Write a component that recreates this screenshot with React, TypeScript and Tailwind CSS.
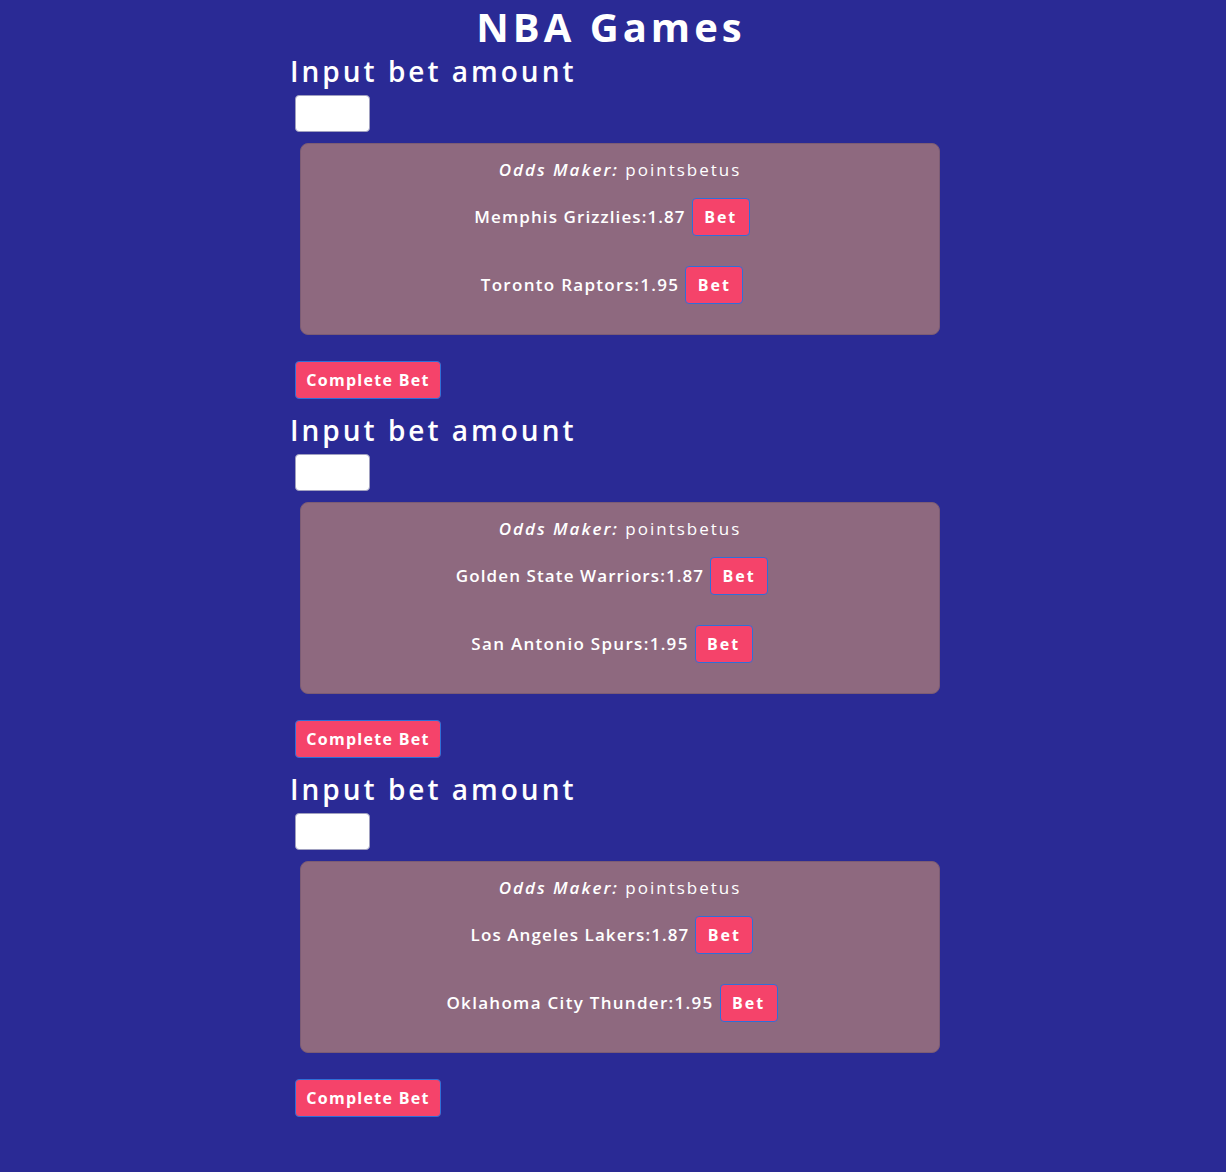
import React from "react";

const games = [
  ["Memphis Grizzlies", "Toronto Raptors"],
  ["Golden State Warriors", "San Antonio Spurs"],
  ["Los Angeles Lakers", "Oklahoma City Thunder"],
];

function BetButton({ label, className }: { label: string; className: string }) {
  return (
    <button
      className={
        "h-[38px] rounded-[4px] border border-[#2f6fd8] bg-[#f5436a] font-bold text-white " +
        className
      }
    >
      {label}
    </button>
  );
}

function Section({ teams, first }: { teams: string[]; first: boolean }) {
  return (
    <div className={first ? "pt-0" : "pt-[14px]"}>
      <h2 className="text-[28px] leading-[34px] font-semibold tracking-[3px]">Input bet amount</h2>
      <input className="ml-[5px] mt-[7px] block h-[37px] w-[75px] rounded-[4px] border border-[#a0a0c0] bg-white" />
      <div className="ml-[10px] mt-[11px] w-[640px] rounded-[8px] border border-[#7c5c74] bg-[#8e697f] pt-[14px] pb-[30px]">
        <div className="text-center text-[17px] leading-[24px] tracking-[2px] font-medium">
          <span className="italic font-semibold">Odds Maker:</span> pointsbetus
        </div>
        <div className="mt-[16px] flex flex-col gap-[30px]">
          <div className="flex items-center justify-center">
            <span className="text-[17px] font-semibold tracking-[1.1px]">{teams[0]}:1.87</span>
            <BetButton label="Bet" className="ml-[6px] mr-[16px] w-[58px] text-[16px] tracking-[2px]" />
          </div>
          <div className="flex items-center justify-center">
            <span className="text-[17px] font-semibold tracking-[1.3px]">{teams[1]}:1.95</span>
            <BetButton label="Bet" className="ml-[6px] mr-[16px] w-[58px] text-[16px] tracking-[2px]" />
          </div>
        </div>
      </div>
      <BetButton label="Complete Bet" className="ml-[5px] mt-[26px] w-[146px] text-[16px] tracking-[1.3px]" />
    </div>
  );
}

export default function App() {
  return (
    <div
      className="min-h-screen bg-[#2a2a95] text-white pb-[40px]"
      style={{ fontFamily: '"Open Sans", sans-serif' }}
    >
      <h1 className="text-center text-[40px] leading-[54px] font-bold tracking-[4px] pr-[4px]">NBA Games</h1>
      <div className="ml-[290px] w-[660px]">
        {games.map((t, i) => (
          <Section key={i} teams={t} first={i === 0} />
        ))}
      </div>
    </div>
  );
}
